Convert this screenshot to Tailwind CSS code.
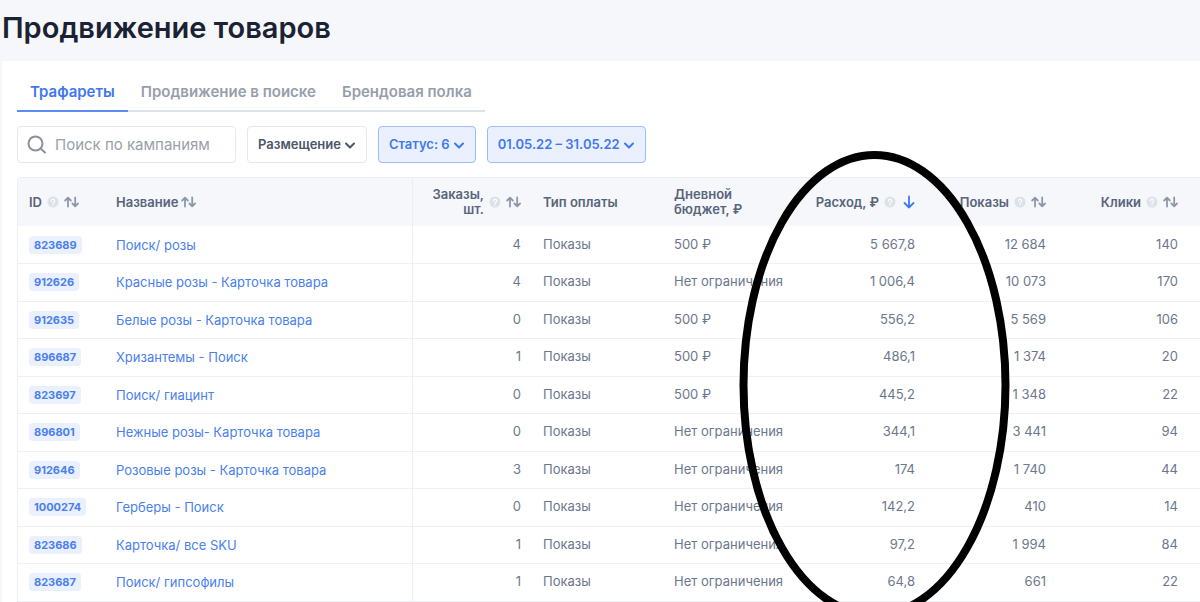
<!DOCTYPE html>
<html lang="ru">
<head>
<meta charset="utf-8">
<title>Продвижение товаров</title>
<script src="https://cdn.jsdelivr.net/npm/@tailwindcss/browser@4"></script>
</head>
<body class="bg-[#f5f7fa] font-['Inter',sans-serif] text-[13px] text-[#6b778c] overflow-hidden">
<svg class="hidden" aria-hidden="true">
  <symbol id="chev" viewBox="0 0 12 12"><path d="M2 4.500l4 4 4-4" fill="none" stroke="currentColor" stroke-width="2" stroke-linecap="round" stroke-linejoin="round"/></symbol>
  <symbol id="help" viewBox="0 0 12 12"><circle cx="6" cy="6" r="5.5" fill="#dde1ea"/><path d="M4.4 4.8a1.6 1.6 0 1 1 2.4 1.4c-.5.3-.8.5-.8 1" fill="none" stroke="#fff" stroke-width="1.2" stroke-linecap="round"/><circle cx="6" cy="8.9" r=".7" fill="#fff"/></symbol>
  <symbol id="sort" viewBox="0 0 15 12"><path d="M4 10.500V2M1.200 4.500L4 1.700l2.800 2.800M11.200 1.500V10M8.400 7.500l2.800 2.800L14 7.500" fill="none" stroke="currentColor" stroke-width="1.800" stroke-linecap="round" stroke-linejoin="round"/></symbol>
  <symbol id="down" viewBox="0 0 12 14"><path d="M6 1.500v11M1.500 8l4.500 4.500L10.500 8" fill="none" stroke="currentColor" stroke-width="1.800" stroke-linecap="round" stroke-linejoin="round"/></symbol>
</svg>
<div class="relative">
  <h1 class="h-[61px] pt-[9px] pl-[2px] text-[29px] leading-[38px] font-semibold text-[#1a2233]">Продвижение товаров</h1>
  <main class="ml-[2px] bg-white pl-[15px] pt-3">
    <nav class="flex w-fit border-b-2 border-[#dfe1e8] text-[15px] leading-5 font-semibold text-[#979eab]">
      <a href="#" class="-mb-[2px] border-b-2 border-[#5b8def] px-[13px] pt-[9px] pb-2 text-[#3f78ee]">Трафареты</a>
      <a href="#" class="px-[13px] pt-[9px] pb-2">Продвижение в поиске</a>
      <a href="#" class="px-[13px] pt-[9px] pb-2">Брендовая полка</a>
    </nav>
    <div class="mt-[14px] flex gap-[11px] font-semibold">
      <label class="flex h-[37px] w-[219px] items-center gap-2 rounded border border-[#e6e8ed] pl-[9px]">
        <svg class="size-5 shrink-0 text-[#8b919e]" viewBox="0 0 20 20" fill="none" stroke="currentColor" stroke-width="2" stroke-linecap="round"><circle cx="8.500" cy="8.500" r="7"/><path d="M13.500 13.500l4.500 4"/></svg>
        <input type="text" aria-label="Поиск по кампаниям" placeholder="Поиск по кампаниям" class="w-full min-w-0 pt-[2px] text-[15px] font-normal outline-none placeholder:text-[#9a9fa9]">
      </label>
      <button class="flex h-[37px] items-center gap-[3px] rounded border border-[#e6e8ed] px-[10px] text-[#4c5668]">Размещение<svg class="size-3"><use href="#chev"/></svg></button>
      <button class="flex h-[37px] items-center gap-[3px] rounded border border-[#9dbcf8] bg-[#eaf0fd] px-[10px] text-[#4079ee]">Статус: 6<svg class="size-3"><use href="#chev"/></svg></button>
      <button class="flex h-[37px] items-center gap-[3px] rounded border border-[#9dbcf8] bg-[#eaf0fd] px-[10px] text-[#4079ee]">01.05.22 – 31.05.22<svg class="size-3"><use href="#chev"/></svg></button>
    </div>
    <div class="mt-[14px] overflow-hidden rounded-tl border-t border-l border-[#eceef3]">
    <table class="w-full table-fixed border-collapse">
      <colgroup><col class="w-[87px]"><col><col class="w-[120px]"><col class="w-[131px]"><col class="w-[131px]"><col class="w-[132px]"><col class="w-[131px]"><col class="w-[143px]"></colgroup>
      <thead class="bg-[#f5f7fa] text-[#58647a] leading-[15px]">
        <tr class="h-12 text-left [&>th]:px-[11px] [&>th]:font-semibold">
          <th><span class="flex items-center gap-[5px]">ID<svg class="size-3"><use href="#help"/></svg><svg class="h-3 w-[15px] text-[#8e97a8]"><use href="#sort"/></svg></span></th>
          <th class="border-r border-[#eceef3]"><span class="flex items-center gap-[3px]">Название<svg class="h-3 w-[15px] text-[#8e97a8]"><use href="#sort"/></svg></span></th>
          <th><span class="flex items-center justify-end gap-[5px] text-right"><span>Заказы,<br>шт.</span><svg class="size-3"><use href="#help"/></svg><svg class="h-3 w-[15px] text-[#8e97a8]"><use href="#sort"/></svg></span></th>
          <th>Тип оплаты</th>
          <th>Дневной<br>бюджет, ₽</th>
          <th><span class="flex items-center justify-end gap-[5px]">Расход, ₽<svg class="size-3"><use href="#help"/></svg><svg class="ml-[2px] h-[14px] w-3 text-[#3f78ee]"><use href="#down"/></svg></span></th>
          <th><span class="flex items-center justify-end gap-[5px]">Показы<svg class="size-3"><use href="#help"/></svg><svg class="h-3 w-[15px] text-[#8e97a8]"><use href="#sort"/></svg></span></th>
          <th><span class="flex items-center justify-end gap-[5px] pr-[11px]">Клики<svg class="size-3"><use href="#help"/></svg><svg class="h-3 w-[15px] text-[#8e97a8]"><use href="#sort"/></svg></span></th>
        </tr>
      </thead>
      <tbody id="rows"></tbody>
    </table>
    </div>
  </main>
  <svg class="pointer-events-none absolute top-[140px] right-[180px] h-[490px] w-[290px]" viewBox="730 140 290 490" aria-hidden="true"><ellipse cx="874.5" cy="385" rx="131" ry="230" fill="none" stroke="#000" stroke-width="8"/></svg>
</div>
<script>
const data = [
 ['823689','Поиск/ розы','4','500 ₽','5 667,8','12 684','140'],
 ['912626','Красные розы - Карточка товара','4','Нет ограничения','1 006,4','10 073','170'],
 ['912635','Белые розы - Карточка товара','0','500 ₽','556,2','5 569','106'],
 ['896687','Хризантемы - Поиск','1','500 ₽','486,1','1 374','20'],
 ['823697','Поиск/ гиацинт','0','500 ₽','445,2','1 348','22'],
 ['896801','Нежные розы- Карточка товара','0','Нет ограничения','344,1','3 441','94'],
 ['912646','Розовые розы - Карточка товара','3','Нет ограничения','174','1 740','44'],
 ['1000274','Герберы - Поиск','0','Нет ограничения','142,2','410','14'],
 ['823686','Карточка/ все SKU','1','Нет ограничения','97,2','1 994','84'],
 ['823687','Поиск/ гипсофилы','1','Нет ограничения','64,8','661','22']
];
document.getElementById('rows').innerHTML = data.map(([id,name,orders,budget,cost,views,clicks]) => `
<tr class="h-[38px] odd:h-[37px] border-b border-[#eef0f4] whitespace-nowrap [&>td]:px-[11px]">
<td><a href="#" class="inline-block rounded bg-[#eaf0fd] px-[5px] text-[11px] leading-[18px] font-bold text-[#4a80ee]">${id}</a></td>
<td class="border-r border-[#eceef3] pt-[2px]"><a href="#" class="text-[#4a80ee]">${name}</a></td>
<td class="text-right">${orders}</td><td>Показы</td><td>${budget}</td>
<td class="text-right">${cost}</td><td class="text-right">${views}</td>
<td class="text-right"><span class="pr-[11px]">${clicks}</span></td></tr>`).join('');
</script>
</body>
</html>
